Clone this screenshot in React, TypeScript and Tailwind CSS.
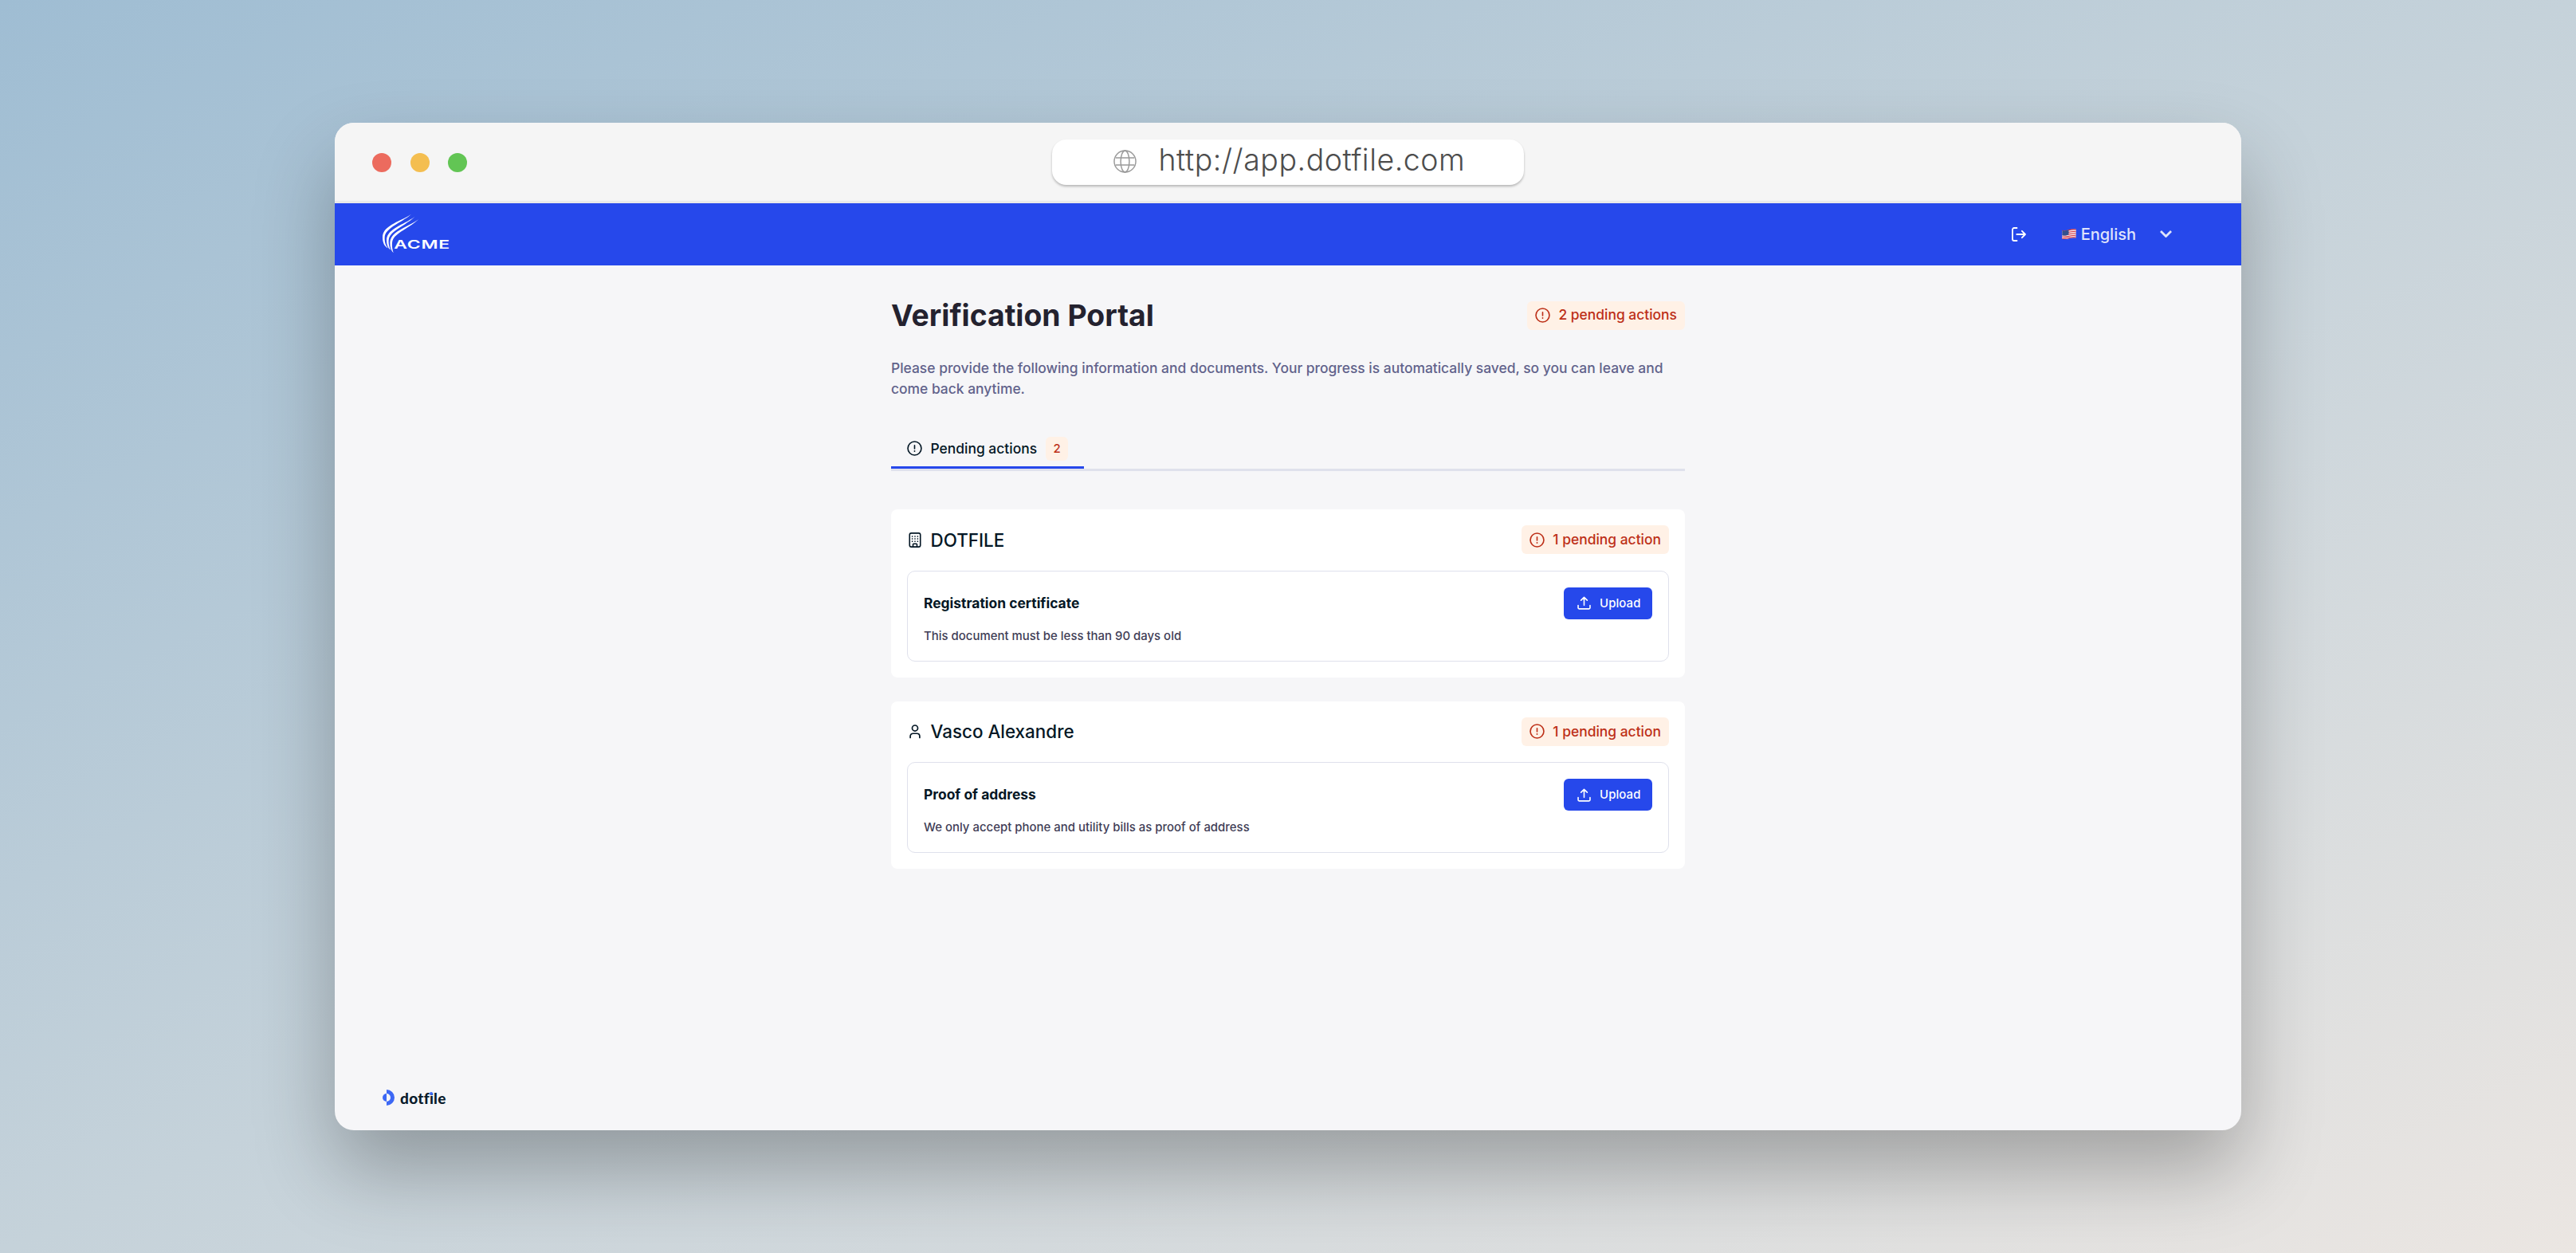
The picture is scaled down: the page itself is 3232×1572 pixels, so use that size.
import type { ReactNode } from "react";

interface IconProps {
    className?: string;
}

interface Entity {
    name: string;
    icon: ReactNode;
    document: string;
    hint: string;
}

function AlertIcon({ className }: IconProps) {
    return (
        <svg className={className} viewBox="0 0 20 20" fill="none" stroke="currentColor" strokeWidth="1.7" strokeLinecap="round">
            <circle cx="10" cy="10" r="8.9" />
            <path d="M10 6.2v4.3" />
            <path d="M10 13.6v.1" strokeWidth="1.9" />
        </svg>
    );
}

function BuildingIcon({ className }: IconProps) {
    return (
        <svg className={className} viewBox="0 0 16 20" fill="none" stroke="currentColor" strokeWidth="1.7">
            <rect x="0.9" y="0.9" width="14.2" height="18.2" rx="2.2" />
            <path d="M5.4 19v-3.2c0-.5.3-.8.8-.8h3.6c.5 0 .8.3.8.8V19" />
            <path d="M3.7 5.2h1.5M7.25 5.2h1.5M10.8 5.2h1.5M3.7 8.4h1.5M7.25 8.4h1.5M10.8 8.4h1.5M3.7 11.8h1.5M7.25 11.8h1.5M10.8 11.8h1.5" strokeWidth="1.5" />
        </svg>
    );
}

function UserIcon({ className }: IconProps) {
    return (
        <svg className={className} viewBox="0 0 16 20" fill="none" stroke="currentColor" strokeWidth="1.8" strokeLinecap="round">
            <circle cx="8" cy="5.8" r="3.7" />
            <path d="M1.8 18.4v-1.8c0-2.2 1.6-3.7 3.7-3.7h5c2.1 0 3.7 1.5 3.7 3.7v1.8" />
        </svg>
    );
}

function UploadIcon({ className }: IconProps) {
    return (
        <svg className={className} viewBox="0 0 18 18" fill="none" stroke="currentColor" strokeWidth="1.7" strokeLinecap="round" strokeLinejoin="round">
            <path d="M9 12V1.5M4.9 5.4 9 1.3l4.1 4.1" />
            <path d="M1.1 12.2v3.2c0 .9.5 1.4 1.4 1.4h13c.9 0 1.4-.5 1.4-1.4v-3.2" />
        </svg>
    );
}

function GlobeIcon({ className }: IconProps) {
    return (
        <svg className={className} viewBox="0 0 30 30" fill="none" stroke="currentColor" strokeWidth="1.5">
            <circle cx="15" cy="15" r="14" />
            <ellipse cx="15" cy="15" rx="5.6" ry="14" />
            <path d="M2.8 10.3h24.4M2.8 19.7h24.4" />
        </svg>
    );
}

function LogoutIcon({ className }: IconProps) {
    return (
        <svg className={className} viewBox="0 0 18 18" fill="none" stroke="currentColor" strokeWidth="1.8" strokeLinecap="round" strokeLinejoin="round">
            <path d="M6.5 1H3C1.8 1 1 1.8 1 3v12c0 1.2.8 2 2 2h3.5" />
            <path d="M6.3 9H17M12.9 4.8 17 9l-4.1 4.2" />
        </svg>
    );
}

function FlagIcon({ className }: IconProps) {
    return (
        <svg className={className} viewBox="0 0 18 14">
            <path d="M.5 2C4 3 6 2 9 1.2 12 .4 15 .2 17.8.8L17.5 11.6c-3-.6-5.5-.2-8.5.6-3 .8-5.5 1.4-8.8.4Z" fill="#efe8ee" />
            <g fill="none" stroke="#d8343f" strokeWidth="1.1">
                <path d="M.5 2.4C4 3.4 6 2.4 9 1.6s6-1 8.8-.4M.5 5C4 6 6 5 9 4.2s6-1 8.7-.4M.5 7.5C4 8.5 6 7.5 9 6.7s6-1 8.6-.4M.4 10C4 11 6 10 9 9.2s6-1 8.5-.4M.3 12.2C4 13.2 6 12.2 9 11.4s5.5-1 8.5-.4" />
            </g>
            <path d="M.5 2C4 3 6 2 8.5 1.3v6.2C6 8.2 4 9 .4 8.2Z" fill="#33518f" />
        </svg>
    );
}

function AcmeLogo() {
    return (
        <svg className="h-[52px] w-[85px]" viewBox="30 18 255 156" fill="#fff">
            <path d="M138 20C95 50 30 62 30 108c0 20 8 34 20 40-9-13-13-23-12-40C39 72 98 55 138 20Z" />
            <path d="M151 30C110 60 46 75 45 118c0 18 5 30 15 37-6-13-8-25-7-37C54 84 112 66 151 30Z" />
            <path d="M165 40C120 72 60 85 58 126c0 19 4 32 13 40-5-14-6-26-5-38C67 94 124 78 165 40Z" />
            <text x="73" y="150" fontFamily="Inter, sans-serif" fontWeight="600" fontSize="44" letterSpacing="1.5" textLength="212" lengthAdjust="spacingAndGlyphs">
                ACME
            </text>
        </svg>
    );
}

function DotfileLogo() {
    return (
        <div className="flex items-center">
            <svg className="h-5 w-[15px]" viewBox="0 0 15 20" fill="#3d68f5">
                <path d="M5 0a10 10 0 0 1 0 20v-5a5 5 0 0 0 0-10Z" />
                <path d="M5 5v10A5 5 0 0 1 5 5Z" />
            </svg>
            <span className="relative mt-[2px] ml-[7px] font-[Lato] text-[19px] leading-5 font-black tracking-[0.3px] text-[#0a1b2b] [font-variant-ligatures:none]">
                dotfile
                <span className="absolute top-[2px] left-[37px] size-[4px] rounded-full bg-[#3d68f5]" />
            </span>
        </div>
    );
}

function PendingBadge({ children }: { children: ReactNode }) {
    return (
        <div className="flex h-9 items-center rounded-md bg-[#fff1e6] px-[10px] text-[17.43px] font-medium text-[#bd2f17]">
            <AlertIcon className="size-[19px]" />
            <span className="ml-[10px]">{children}</span>
        </div>
    );
}

function EntityCard({ name, icon, document, hint }: Entity) {
    return (
        <section className="rounded-lg bg-white p-5">
            <div className="flex h-9 items-center justify-between">
                <h2 className="flex items-center gap-[10.5px] text-[22.41px] font-medium text-[#041725]">
                    <span className="flex w-[19px] justify-center">{icon}</span>
                    {name}
                </h2>
                <PendingBadge>1 pending action</PendingBadge>
            </div>
            <div className="mt-[20.5px] flex h-[114px] items-start justify-between rounded-[10px] border border-[#dfe1ec] p-5">
                <div>
                    <h3 className="text-[17.43px] leading-10 font-bold text-[#041725]">{document}</h3>
                    <p className="mt-px text-[14.94px] leading-10 font-medium text-[#3f3d56]">{hint}</p>
                </div>
                <button className="flex h-10 w-[111px] items-center rounded-md bg-[#2648eb] pl-[17px] text-[14.94px] font-medium text-white">
                    <UploadIcon className="size-[17px]" />
                    <span className="ml-[11px] tracking-[0.1px]">Upload</span>
                </button>
            </div>
        </section>
    );
}

const entities: Entity[] = [
    {
        name: "DOTFILE",
        icon: <BuildingIcon className="h-[19px] w-4" />,
        document: "Registration certificate",
        hint: "This document must be less than 90 days old",
    },
    {
        name: "Vasco Alexandre",
        icon: <UserIcon className="h-[19px] w-4" />,
        document: "Proof of address",
        hint: "We only accept phone and utility bills as proof of address",
    },
];

export default function App() {
    return (
        <div className="h-[1572px] w-[3232px] overflow-hidden bg-[linear-gradient(to_bottom_right,#9fbdd3,#c5d2da_50%,#ebe6e2)] pt-[154px] font-[Inter,sans-serif]">
            <div className="mx-auto flex h-[1264px] w-[2392px] flex-col overflow-hidden rounded-[24px] bg-[#f6f6f8] shadow-[0_50px_100px_rgba(0,0,0,0.28)]">
                <div className="grid h-[101px] shrink-0 grid-cols-3 items-center border-b-[3px] border-[#e9e9ea] bg-[#f5f5f5] px-[47px]">
                    <div className="flex gap-[23.5px] pt-[2px]">
                        <span className="size-6 rounded-full bg-[#ec6b5e]" />
                        <span className="size-6 rounded-full bg-[#f4be50]" />
                        <span className="size-6 rounded-full bg-[#62c554]" />
                    </div>
                    <div className="flex h-[57px] w-[592px] items-center justify-self-center rounded-[18px] bg-white pl-[77px] shadow-[0_2px_3px_rgba(0,0,0,0.25)]">
                        <GlobeIcon className="mb-[2px] size-[29px] text-[#999]" />
                        <span className="mb-[5px] ml-[27.5px] text-[37.5px] leading-none font-light tracking-[0.54px] text-[#4d4d4d]">
                            http://app.dotfile.com
                        </span>
                    </div>
                </div>

                <header className="flex h-[78px] shrink-0 items-center justify-between bg-[#2648eb] pr-[87px] pl-[60px]">
                    <AcmeLogo />
                    <div className="mb-[1px] flex items-center text-[20px] font-medium text-[#dfe3fb]">
                        <LogoutIcon className="size-[18px] text-white" />
                        <FlagIcon className="ml-[45px] h-[14px] w-[18px]" />
                        <span className="ml-[6px]">English</span>
                        <svg className="ml-[30px] h-[9px] w-[15px]" viewBox="0 0 15 9" fill="none" stroke="currentColor" strokeWidth="2.8">
                            <path d="m1 1 6.5 6.5L14 1" />
                        </svg>
                    </div>
                </header>

                <main className="mx-auto w-[996px] grow pt-[44.5px]">
                    <div className="flex h-9 items-center justify-between">
                        <h1 className="text-[37.35px] font-bold text-[#24222f]">Verification Portal</h1>
                        <PendingBadge>2 pending actions</PendingBadge>
                    </div>
                    <p className="mt-[35px] text-[17.43px] leading-[26.15px] font-medium text-[#61628b]">
                        Please provide the following information and documents. Your progress is automatically saved, so you can leave and
                        come back anytime.
                    </p>

                    <div className="mt-[47px] flex border-b-[3px] border-[#dfe1ec]">
                        <div className="flex h-10 items-start border-b-[3px] border-[#2648eb] px-5">
                            <div className="flex h-[30px] items-center text-[17.43px] font-medium text-[#041725]">
                                <AlertIcon className="size-[19px]" />
                                <span className="ml-[10.5px]">Pending actions</span>
                                <span className="ml-[11px] flex h-[30px] w-7 items-center justify-center rounded-md bg-[#fff1e6] text-[14.94px] text-[#bd2f17]">
                                    2
                                </span>
                            </div>
                        </div>
                    </div>

                    <div className="mt-[48.5px] flex flex-col gap-[30px]">
                        {entities.map((entity) => (
                            <EntityCard key={entity.name} {...entity} />
                        ))}
                    </div>
                </main>

                <footer className="pb-[30px] pl-[60px]">
                    <DotfileLogo />
                </footer>
            </div>
        </div>
    );
}
